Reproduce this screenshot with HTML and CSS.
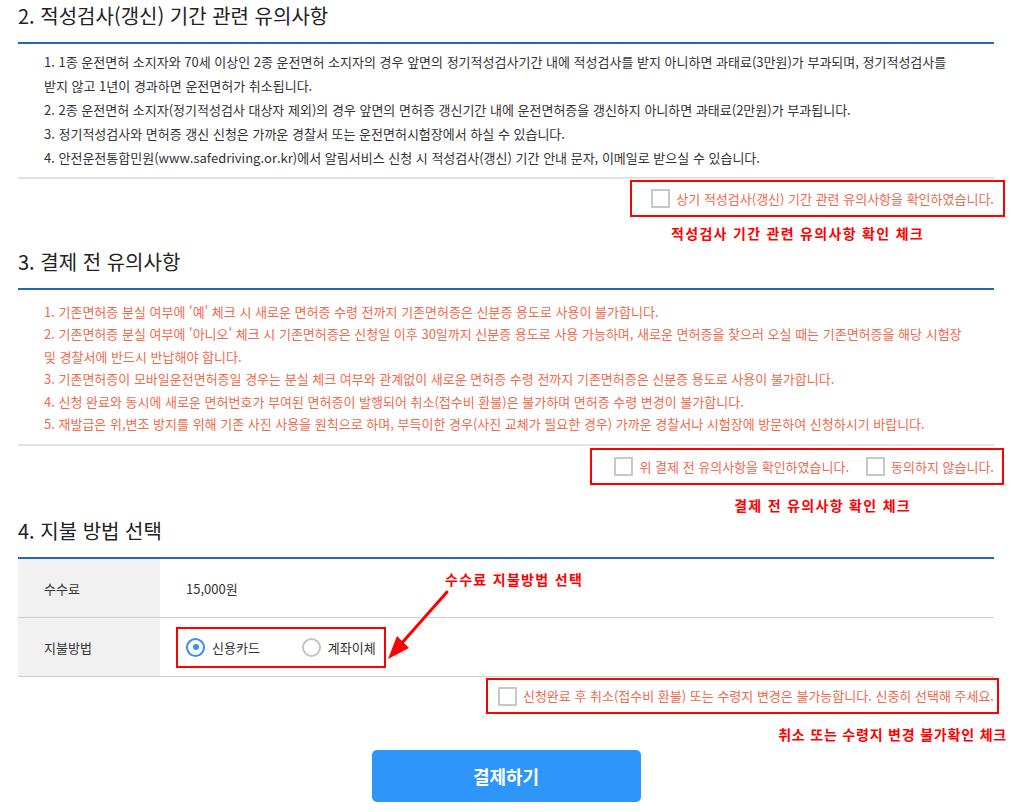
FILE: index.html
```
<!DOCTYPE html>
<html lang="ko">
<head>
<meta charset="utf-8">
<title>적성검사(갱신) 결제</title>
<link rel="stylesheet" href="styles.css">
</head>
<body>
<div class="page">
  <section class="sec">
    <h2 class="sec-title">2. 적성검사(갱신) 기간 관련 유의사항</h2>
    <ul class="notice">
      <li>1. 1종 운전면허 소지자와 70세 이상인 2종 운전면허 소지자의 경우 앞면의 정기적성검사기간 내에 적성검사를 받지 아니하면 과태료(3만원)가 부과되며, 정기적성검사를<br>받지 않고 1년이 경과하면 운전면허가 취소됩니다.</li>
      <li>2. 2종 운전면허 소지자(정기적성검사 대상자 제외)의 경우 앞면의 면허증 갱신기간 내에 운전면허증을 갱신하지 아니하면 과태료(2만원)가 부과됩니다.</li>
      <li>3. 정기적성검사와 면허증 갱신 신청은 가까운 경찰서 또는 운전면허시험장에서 하실 수 있습니다.</li>
      <li>4. 안전운전통합민원(www.safedriving.or.kr)에서 알림서비스 신청 시 적성검사(갱신) 기간 안내 문자, 이메일로 받으실 수 있습니다.</li>
    </ul>
    <div class="agree-row agree-row-1">
      <div class="mark-box mark-box-1">
        <label class="chk"><span class="chk-box"></span><span>상기 적성검사(갱신) 기간 관련 유의사항을 확인하였습니다.</span></label>
      </div>
    </div>
    <p class="mark-label mark-label-1">적성검사 기간 관련 유의사항 확인 체크</p>
  </section>

  <section class="sec">
    <h2 class="sec-title">3. 결제 전 유의사항</h2>
    <ul class="notice notice-warn">
      <li>1. 기존면허증 분실 여부에 '예' 체크 시 새로운 면허증 수령 전까지 기존면허증은 신분증 용도로 사용이 불가합니다.</li>
      <li>2. 기존면허증 분실 여부에 '아니오' 체크 시 기존면허증은 신청일 이후 30일까지 신분증 용도로 사용 가능하며, 새로운 면허증을 찾으러 오실 때는 기존면허증을 해당 시험장<br>및 경찰서에 반드시 반납해야 합니다.</li>
      <li>3. 기존면허증이 모바일운전면허증일 경우는 분실 체크 여부와 관계없이 새로운 면허증 수령 전까지 기존면허증은 신분증 용도로 사용이 불가합니다.</li>
      <li>4. 신청 완료와 동시에 새로운 면허번호가 부여된 면허증이 발행되어 취소(접수비 환불)은 불가하며 면허증 수령 변경이 불가합니다.</li>
      <li>5. 재발급은 위,변조 방지를 위해 기존 사진 사용을 원칙으로 하며, 부득이한 경우(사진 교체가 필요한 경우) 가까운 경찰서나 시험장에 방문하여 신청하시기 바랍니다.</li>
    </ul>
    <div class="agree-row agree-row-2">
      <div class="mark-box mark-box-2">
        <label class="chk"><span class="chk-box"></span><span>위 결제 전 유의사항을 확인하였습니다.</span></label>
        <label class="chk"><span class="chk-box"></span><span>동의하지 않습니다.</span></label>
      </div>
    </div>
    <p class="mark-label mark-label-2">결제 전 유의사항 확인 체크</p>
  </section>

  <section class="sec">
    <h2 class="sec-title sec-title-4">4. 지불 방법 선택</h2>
    <div class="pay-wrap">
      <div class="pay-row">
        <div class="pay-th">수수료</div>
        <div class="pay-td">15,000원</div>
      </div>
      <div class="pay-row">
        <div class="pay-th">지불방법</div>
        <div class="pay-td pay-td-radio">
          <div class="mark-box mark-box-3">
            <label class="radio"><span class="radio-dot is-on"></span><span>신용카드</span></label>
            <label class="radio"><span class="radio-dot"></span><span>계좌이체</span></label>
          </div>
        </div>
      </div>
      <p class="arrow-label">수수료 지불방법 선택</p>
      <svg class="arrow" width="100" height="80" viewBox="0 0 100 80" aria-hidden="true">
        <line x1="77" y1="5" x2="31" y2="57" stroke="#ff0000" stroke-width="3" stroke-linecap="round"/>
        <polygon points="18,72 39,61 27,49" fill="#ff0000"/>
      </svg>
    </div>
    <div class="agree-row agree-row-4">
      <div class="mark-box mark-box-4">
        <label class="chk"><span class="chk-box"></span><span>신청완료 후 취소(접수비 환불) 또는 수령지 변경은 불가능합니다. 신중히 선택해 주세요.</span></label>
      </div>
    </div>
    <p class="mark-label mark-label-4">취소 또는 수령지 변경 불가확인 체크</p>
    <div class="btn-row">
      <button class="btn-pay" type="button">결제하기</button>
    </div>
  </section>
</div>
</body>
</html>
```
FILE: styles.css
```
* {
  box-sizing: border-box;
  margin: 0;
  padding: 0;
}

body {
  margin: 0;
  background: #fff;
  font-family: "Noto Sans CJK KR", "Noto Sans", sans-serif;
  color: #333;
}

.page {
  width: 1024px;
  padding: 0 30px 0 18px;
}

.sec-title {
  font-size: 20px;
  font-weight: 400;
  color: #222;
  line-height: 32px;
  padding-bottom: 10px;
  border-bottom: 2px solid #2364c6;
  letter-spacing: 0;
}

.notice {
  list-style: none;
  padding: 6px 0 7px 26px;
  font-size: 13px;
  line-height: 24px;
  letter-spacing: 0;
  color: #333;
  border-bottom: 2px solid #e3e3e3;
}

.notice-warn {
  padding: 11px 0 9px 26px;
  line-height: 22.4px;
  color: #f2694b;
}

.agree-row {
  display: flex;
  justify-content: flex-end;
}

.agree-row-1 { margin-top: 1px; }
.agree-row-2 { margin-top: 2px; }
.agree-row-4 { margin-top: 1px; }

.mark-box {
  display: flex;
  align-items: center;
  border: 2px solid #ff0000;
}

.mark-box-1 {
  height: 37px;
  padding: 0 9px 0 19px;
  margin-right: -11px;
}

.mark-box-2 {
  height: 37px;
  padding: 0 8px 0 22px;
  margin-right: -10px;
  gap: 17px;
}

.mark-box-4 {
  height: 36px;
  padding: 0 3px 0 10px;
  margin-right: -5px;
}

.chk {
  display: flex;
  align-items: center;
  gap: 6px;
  font-size: 13px;
  letter-spacing: 0;
  color: #f0694e;
  line-height: 20px;
}

.chk-box {
  width: 19px;
  height: 19px;
  border: 2px solid #c8c8c8;
  background: #fff;
  flex: none;
}

.mark-label {
  font-size: 14px;
  font-weight: 700;
  color: #ff0000;
  line-height: 20px;
  letter-spacing: 1.3px;
  text-align: right;
}

.mark-label-1 {
  margin-top: 6px;
  margin-bottom: 3px;
  padding-right: 70px;
}

.mark-label-2 {
  margin-top: 10px;
  padding-right: 83px;
}

.mark-label-4 {
  margin-top: 10px;
  margin-right: -13px;
  letter-spacing: 0.8px;
}

.sec-title-4 {
  padding-bottom: 10px;
}

.pay-wrap {
  position: relative;
}

.pay-row {
  display: grid;
  grid-template-columns: 142px 1fr;
  height: 59px;
  border-bottom: 1px solid #cfcfcf;
}

.pay-th {
  background: #f1f1f1;
  display: flex;
  align-items: center;
  padding-left: 26px;
  font-size: 13px;
  color: #333;
}

.pay-td {
  display: flex;
  align-items: center;
  padding-left: 26px;
  font-size: 13px;
  color: #333;
}

.pay-td-radio {
  padding-left: 16px;
}

.mark-box-3 {
  height: 41px;
  padding: 0 8px;
  gap: 42px;
}

.radio {
  display: flex;
  align-items: center;
  gap: 7px;
  font-size: 13px;
  color: #333;
}

.radio-dot {
  width: 19px;
  height: 19px;
  border-radius: 50%;
  border: 2px solid #c4c4c4;
  background: #fff;
  flex: none;
  position: relative;
}

.radio-dot.is-on {
  border-color: #3b8fe8;
}

.radio-dot.is-on::after {
  content: "";
  position: absolute;
  left: 50%;
  top: 50%;
  width: 6px;
  height: 6px;
  margin: -3px 0 0 -3px;
  border-radius: 50%;
  background: #3b8fe8;
}

.arrow-label {
  position: absolute;
  left: 427px;
  top: 10px;
  font-size: 14px;
  font-weight: 700;
  color: #ff0000;
  line-height: 20px;
  letter-spacing: 1.3px;
  white-space: nowrap;
}

.arrow {
  position: absolute;
  left: 352px;
  top: 28px;
}

.btn-row {
  display: flex;
  justify-content: center;
  margin-top: 6px;
}

.btn-pay {
  width: 269px;
  height: 52px;
  border: 0;
  border-radius: 5px;
  background: #2d96f8;
  color: #fff;
  font-family: "Noto Sans CJK KR", "Noto Sans", sans-serif;
  font-size: 18px;
  font-weight: 700;
  letter-spacing: 0;
}
```
